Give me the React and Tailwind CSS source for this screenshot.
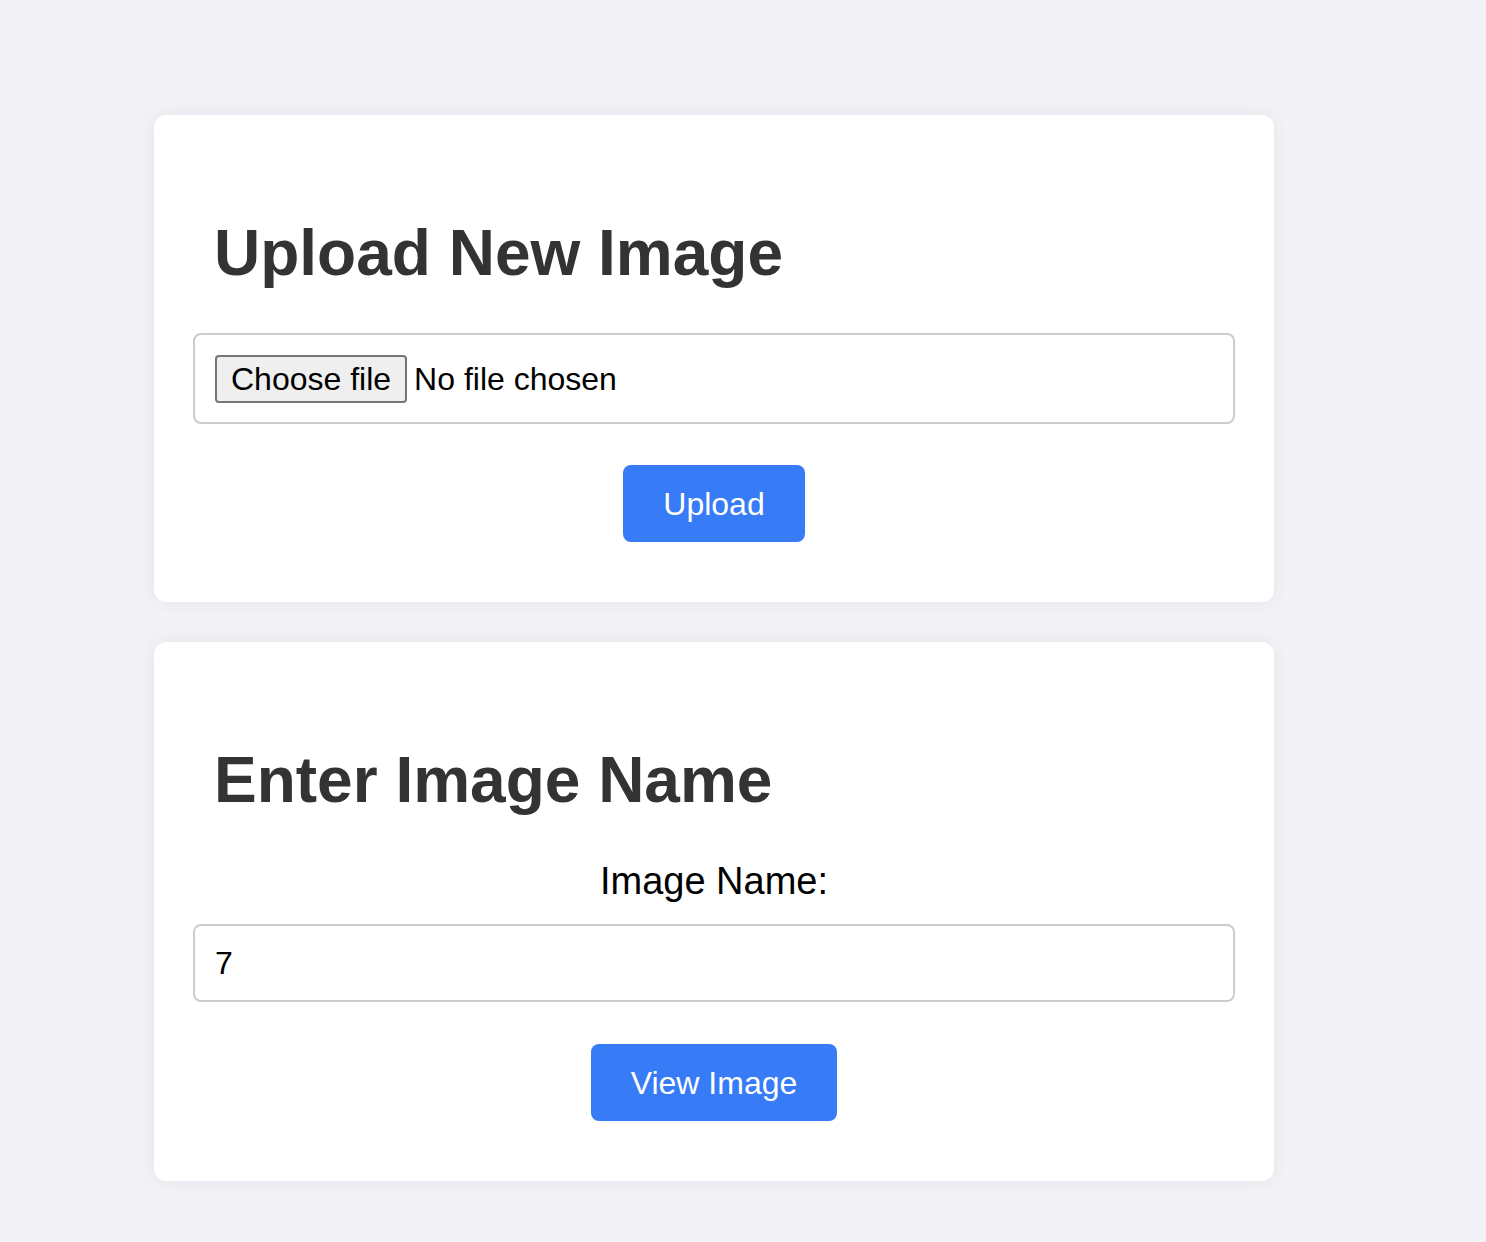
import React, { useState } from 'react';

const Card = ({ children }) => (
    <div className="bg-white rounded-[12px] shadow-[0_0_18px_rgba(30,30,60,0.08)] px-[39px] pt-[102px] pb-[60px]">
        {children}
    </div>
);

export default function App() {
    const [name, setName] = useState('7');

    return (
        <div className="min-h-screen bg-[#f3f3f7] pt-[115px] pl-[154px] pb-[61px] font-['Liberation_Sans',Arial,sans-serif]">
            <div className="w-[1120px] flex flex-col gap-[40px]">
                {/* Upload card */}
                <Card>
                    <h1 className="text-[64px] leading-[72px] font-bold text-[#333333] pl-[21px] mb-[44px]">Upload New Image</h1>
                    <div className="h-[91px] border-2 border-[#cccccc] rounded-[8px] flex items-center px-[20px]">
                        <button className="h-[48px] px-[14px] bg-[#efefef] border-2 border-[#767676] rounded-[4px] text-[32px] leading-none text-black">
                            Choose file
                        </button>
                        <span className="ml-[7px] text-[32px] text-black">No file chosen</span>
                    </div>
                    <div className="flex justify-center mt-[41px]">
                        <button className="h-[77px] w-[182px] bg-[#377bf6] rounded-[8px] text-white text-[32px]">
                            Upload
                        </button>
                    </div>
                </Card>

                {/* Lookup card */}
                <Card>
                    <h1 className="text-[64px] leading-[72px] font-bold text-[#333333] pl-[21px] mb-[43px]">Enter Image Name</h1>
                    <label className="block text-center text-[38px] leading-[44px] text-black mb-[21px]">Image Name:</label>
                    <input
                        value={name}
                        onChange={(e) => setName(e.target.value)}
                        className="block w-full h-[78px] border-2 border-[#cccccc] rounded-[8px] px-[20px] text-[32px] text-black outline-none"
                    />
                    <div className="flex justify-center mt-[42px]">
                        <button className="h-[77px] w-[246px] bg-[#377bf6] rounded-[8px] text-white text-[32px]">
                            View Image
                        </button>
                    </div>
                </Card>
            </div>
        </div>
    );
}
